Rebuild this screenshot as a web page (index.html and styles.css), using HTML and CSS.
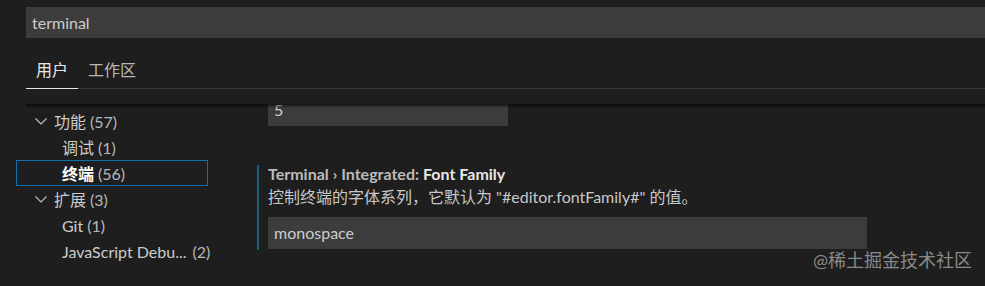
FILE: index.html
```html
<!DOCTYPE html>
<html lang="zh-CN">
<head>
    <meta charset="UTF-8">
    <title>设置 - terminal</title>
    <link rel="stylesheet" href="styles.css">
</head>
<body>

    <!-- Search -->
    <div class="search">terminal</div>

    <!-- Scope tabs -->
    <div class="tabs">
        <div class="tab active">用户</div>
        <div class="tab">工作区</div>
    </div>

    <div class="main">
        <!-- Table of contents -->
        <div class="toc">
            <div class="toc-row group">
                <svg class="chevron" width="16" height="16" viewBox="0 0 16 16"><path d="M2.5 5.5 L8 11 L13.5 5.5" fill="none" stroke="#c5c5c5" stroke-width="1.1"/></svg>
                <span>功能</span><span class="count">(57)</span>
            </div>
            <div class="toc-row child">调试<span class="count">(1)</span></div>
            <div class="toc-row child selected"><b>终端</b><span class="count">(56)</span></div>
            <div class="toc-row group">
                <svg class="chevron" width="16" height="16" viewBox="0 0 16 16"><path d="M2.5 5.5 L8 11 L13.5 5.5" fill="none" stroke="#c5c5c5" stroke-width="1.1"/></svg>
                <span>扩展</span><span class="count">(3)</span>
            </div>
            <div class="toc-row child">Git<span class="count">(1)</span></div>
            <div class="toc-row child">JavaScript Debu...<span class="count wide">(2)</span></div>
        </div>

        <!-- Settings list -->
        <div class="settings">
            <div class="setting-item">
                <div class="input short">5</div>
            </div>
            <div class="setting-item focused">
                <div class="setting-title">
                    <span class="category">Terminal › Integrated: </span><span class="label">Font Family</span>
                </div>
                <div class="setting-desc">控制终端的字体系列，它默认为 "#editor.fontFamily#" 的值。</div>
                <div class="input long">monospace</div>
            </div>
        </div>
    </div>

    <div class="watermark">@稀土掘金技术社区</div>

</body>
</html>
```

FILE: styles.css
```css
/* Reset */
* { margin: 0; padding: 0; box-sizing: border-box; }

/* Body */
body {
    font-family: Lato, "Noto Sans CJK SC", sans-serif;
    font-size: 16px;
    background-color: #1e1e1e;
    color: #cccccc;
    overflow: hidden;
    height: 286px;
    position: relative;
}

/* Search */
.search {
    margin: 7px 0 0 26px;
    height: 31px;
    line-height: 31px;
    padding-left: 6px;
    background: #3c3c3c;
    color: #cccccc;
}

/* Tabs */
.tabs {
    display: flex;
    align-items: flex-end;
    margin-left: 26px;
    height: 51px;
    border-bottom: 1px solid #3a3a3a;
}

.tab {
    padding: 0 10px 8px;
    line-height: 20px;
    color: #b8b8b8;
}

.tab.active {
    color: #e7e7e7;
    border-bottom: 1px solid #e7e7e7;
    margin-bottom: -1px;
}

/* Main area */
.main {
    display: flex;
    height: 182px;
    margin-top: 15px;
    overflow: hidden;
    position: relative;
}

.main::before {
    content: "";
    position: absolute;
    top: 0;
    left: 26px;
    right: 0;
    height: 4px;
    box-shadow: inset 0 5px 4px -4px #000;
}

/* TOC */
.toc {
    width: 257px;
    flex-shrink: 0;
    padding: 4px 0 0 16px;
}

.toc-row {
    display: flex;
    align-items: center;
    width: 192px;
    height: 26px;
    border: 1px solid transparent;
    white-space: nowrap;
}

.toc-row.group { padding-left: 16px; }
.toc-row.child { padding-left: 45px; }

.chevron {
    margin-right: 5px;
}

.count {
    margin-left: 4px;
    color: #b8b8b8;
}

.count.wide { margin-left: 6px; }

.toc-row.selected {
    border-color: #0e70b0;
}

.toc-row.selected b {
    color: #ffffff;
    font-weight: bold;
}

/* Settings */
.settings {
    flex: 1;
}

.setting-item {
    border-left: 2px solid transparent;
    padding-left: 9px;
}

.setting-item.focused {
    border-left-color: #19607f;
    margin-top: 39px;
    padding-bottom: 1px;
}

.input {
    height: 32px;
    line-height: 32px;
    padding-left: 6px;
    background: #3c3c3c;
    color: #cccccc;
}

.input.short {
    width: 240px;
    margin-top: -10px;
}

.input.long {
    width: 599px;
    margin-top: 10px;
}

.setting-title {
    line-height: 18px;
    font-weight: bold;
}

.category {
    color: #bbbbbb;
}

.label {
    color: #e7e7e7;
}

.setting-desc {
    line-height: 20px;
    margin-top: 4px;
    color: #c8c8c8;
    white-space: nowrap;
}

/* Watermark */
.watermark {
    position: absolute;
    right: 13px;
    bottom: 14px;
    font-size: 18px;
    color: #8a8a8a;
}
```
